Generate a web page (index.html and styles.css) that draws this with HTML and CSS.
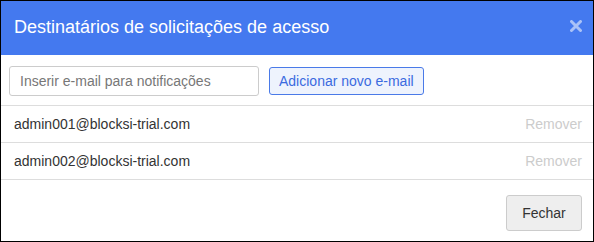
FILE: index.html
```html
<!DOCTYPE html>
<html lang="pt">
<head>
<meta charset="utf-8">
<link rel="stylesheet" href="styles.css">
</head>
<body>
<div class="modal">
  <div class="header">
    <div class="title">Destinatários de solicitações de acesso</div>
    <svg class="close" width="12" height="12" viewBox="0 0 12 12"><path d="M1.5 1.5 L10.5 10.5 M10.5 1.5 L1.5 10.5" stroke="#fff" stroke-width="3" stroke-linecap="round"/></svg>
  </div>
  <div class="add-row">
    <input class="email-input" type="text" placeholder="Inserir e-mail para notificações">
    <button class="add-btn">Adicionar novo e-mail</button>
  </div>
  <div class="list">
    <div class="item"><span class="email">admin001@blocksi-trial.com</span><span class="remove">Remover</span></div>
    <div class="item"><span class="email">admin002@blocksi-trial.com</span><span class="remove">Remover</span></div>
  </div>
  <div class="footer">
    <button class="close-btn">Fechar</button>
  </div>
</div>
</body>
</html>
```
FILE: styles.css
```css
* { box-sizing: border-box; }
html, body { margin: 0; padding: 0; background: #fff; }
body { font-family: "Liberation Sans", Arial, sans-serif; }
.modal {
  width: 594px;
  height: 242px;
  border: 1px solid #000;
  display: flex;
  flex-direction: column;
  background: #fff;
}
.header {
  height: 54px;
  background: #4479ef;
  display: flex;
  align-items: center;
  justify-content: space-between;
  padding: 0 11px 0 13px;
}
.title {
  color: #fff;
  font-size: 18px;
  margin-top: -2px;
}
.close { opacity: 0.55; margin-top: -5px; }
.add-row {
  height: 51px;
  display: flex;
  align-items: flex-start;
  padding: 11px 8px 0;
  gap: 10px;
  border-bottom: 1px solid #ddd;
}
.email-input {
  width: 250px;
  height: 30px;
  border: 1px solid #ccc;
  border-radius: 3px;
  padding: 0 10px;
  font-family: inherit;
  font-size: 14px;
  color: #555;
  outline: none;
}
.email-input::placeholder { color: #777; }
.add-btn {
  height: 28px;
  margin-top: 1px;
  padding: 0 9px;
  background: #eef3fd;
  border: 1px solid #4a7ae8;
  border-radius: 3px;
  color: #3b6be0;
  font-family: inherit;
  font-size: 14px;
}
.item {
  height: 37px;
  border-bottom: 1px solid #ddd;
  display: flex;
  align-items: center;
  justify-content: space-between;
  padding: 0 11px 0 13px;
  font-size: 14px;
}
.email { color: #333; }
.remove { color: #ccc; }
.footer {
  display: flex;
  justify-content: flex-end;
  padding: 15px 11px 0;
}
.close-btn {
  width: 76px;
  height: 36px;
  background: #eee;
  border: 1px solid #ccc;
  border-radius: 3px;
  color: #333;
  font-family: inherit;
  font-size: 14px;
}
```
